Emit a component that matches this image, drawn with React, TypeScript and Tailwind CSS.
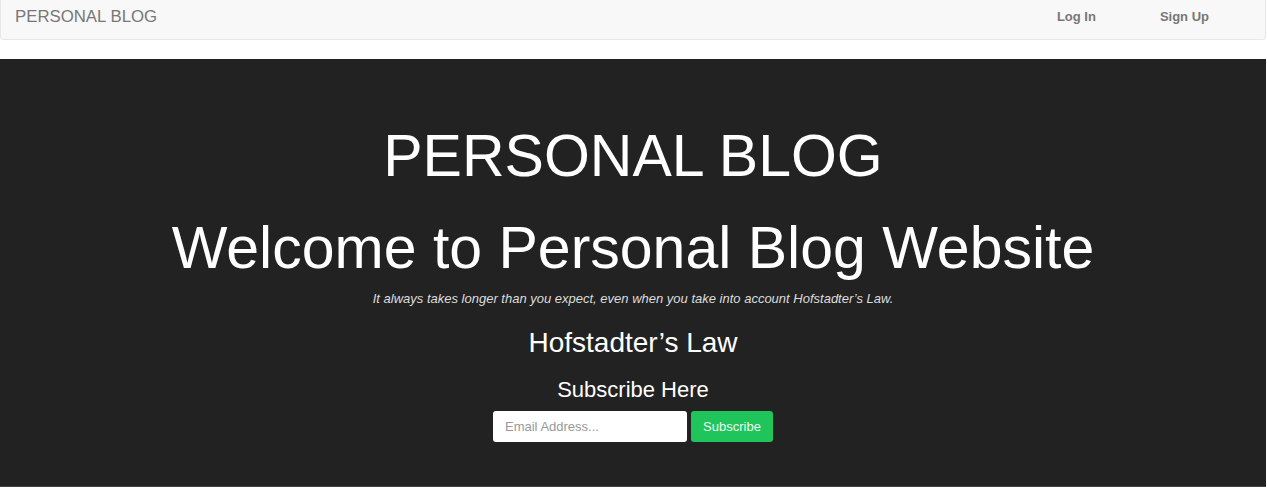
import React from "react";

const App: React.FC = () => {
  return (
    <div className="w-[1266px] min-h-[488px] bg-white font-['Liberation_Sans',Arial,sans-serif]">
      {/* navbar */}
      <nav className="h-[40px] flex items-center justify-between bg-[#f8f8f8] border border-t-0 border-[#e7e7e7] rounded-b">
        <span className="pl-[14px] text-[16.8px] text-[#777] pb-[6px]">PERSONAL BLOG</span>
        <div className="flex items-center gap-[64px] pr-[56px] pb-[6px]">
          <a className="text-[13px] font-bold text-[#777]">Log In</a>
          <a className="text-[13px] font-bold text-[#777]">Sign Up</a>
        </div>
      </nav>

      {/* hero */}
      <section className="mt-[19px] bg-[#222] h-[428px] border-b border-[#444] flex flex-col items-center text-white">
        <h1 className="mt-[62px] text-[59px] leading-[70px]">PERSONAL BLOG</h1>
        <h2 className="mt-[22px] text-[59px] leading-[70px]">Welcome to Personal Blog Website</h2>
        <p className="mt-[7px] text-[13px] leading-[17px] italic text-[#ddd]">
          It always takes longer than you expect, even when you take into account Hofstadter’s Law.
        </p>
        <h3 className="mt-[20px] text-[28px] leading-[32px]">Hofstadter’s Law</h3>
        <h4 className="mt-[18px] text-[22px] leading-[26px]">Subscribe Here</h4>
        <form className="mt-[8px] flex gap-[4px]" onSubmit={(e) => e.preventDefault()}>
          <input
            type="email"
            placeholder="Email Address..."
            className="w-[194px] h-[31px] px-[12px] bg-white rounded-[3px] text-[13px] text-[#555] placeholder:text-[#999] outline-none"
          />
          <button
            type="submit"
            className="w-[82px] h-[31px] bg-[#1fc45a] rounded-[3px] text-[13px] text-[#eefbf2]"
          >
            Subscribe
          </button>
        </form>
      </section>
    </div>
  );
};

export default App;
